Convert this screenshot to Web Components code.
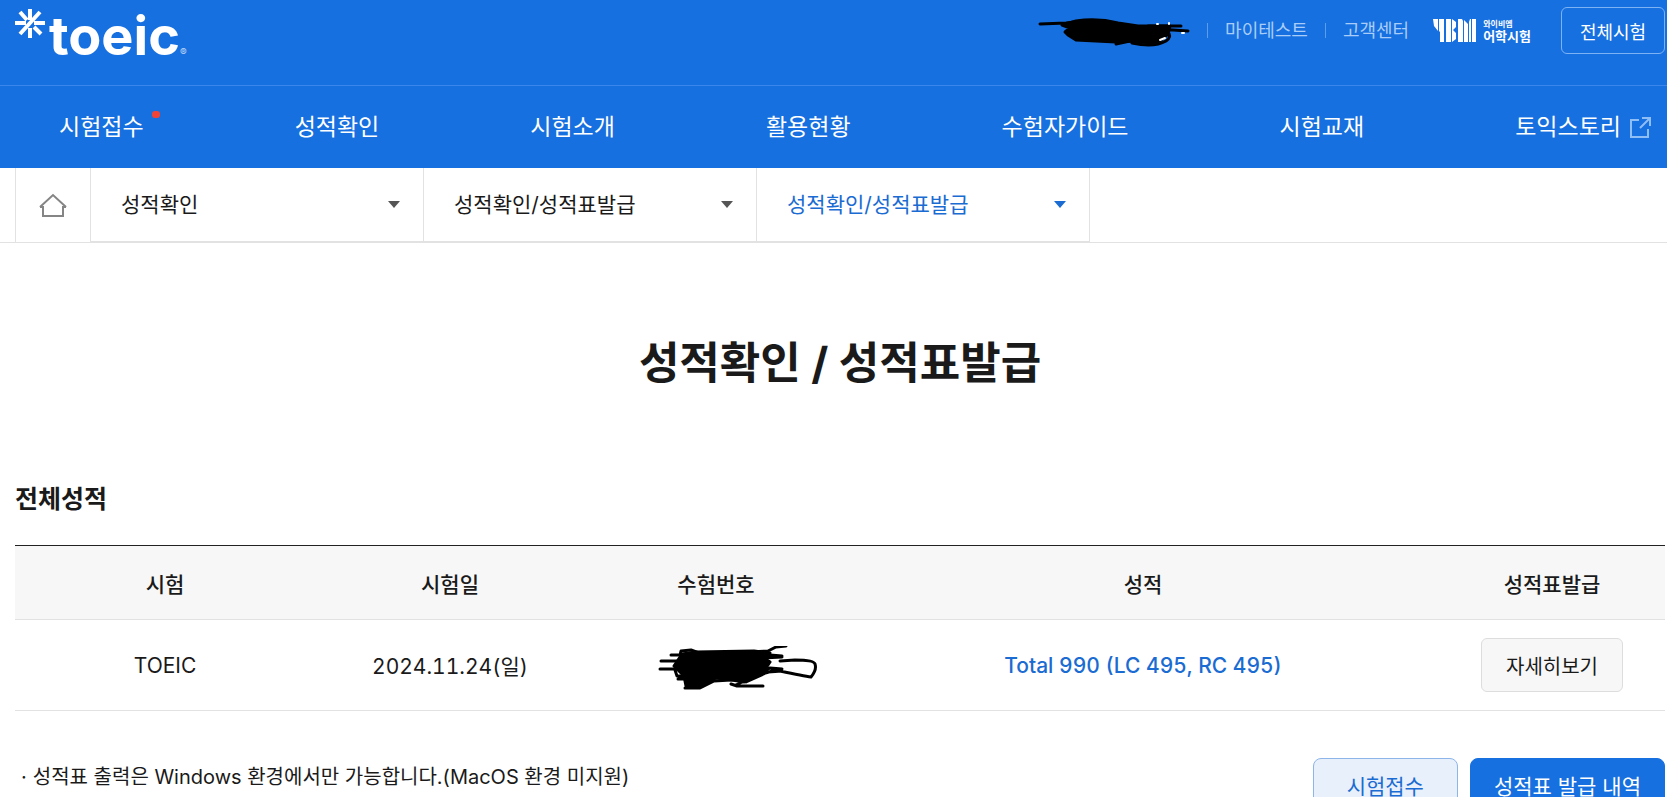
<!DOCTYPE html>
<html lang="ko">
<head>
<meta charset="UTF-8">
<meta name="viewport" content="width=device-width, initial-scale=1.0">
<title>성적확인/성적표발급 | TOEIC</title>
<style>
  :root {
    --blue: #1770E0;
    --link: #1A6BD2;
    --ink: #1A1A1A;
    --line: #E2E2E2;
  }

  body {
    margin: 0;
    background: #FFFFFF;
    color: var(--ink);
    font-family: Inter, "Noto Sans CJK KR", sans-serif;
  }
</style>
</head>
<body>
  <toeic-page></toeic-page>

<script>
class ToeicLogo extends HTMLElement {
  connectedCallback() {
    this.attachShadow({ mode: 'open' });

    this.shadowRoot.innerHTML = `
      <style>
        :host {
          display: block;
        }

        a {
          display: flex;
          align-items: flex-start;
          color: #FFFFFF;
          text-decoration: none;
        }

        svg {
          width: 30px;
          height: 30px;
          margin-top: 8px;
        }

        .word {
          margin-left: 4px;
          font-size: 54px;
          font-weight: 700;
          line-height: 72px;
        }

        .reg {
          align-self: flex-end;
          font-size: 10px;
          line-height: 40px;
          opacity: 0.7;
        }
      </style>

      <a href="/">
        <svg viewBox="0 0 30 30" fill="none" stroke="currentColor" stroke-width="4" aria-hidden="true">
          <path d="M15 1v11M15 30V20M0 15h11M30 15H19M5 4l7 8M25 4L5 26M26 26l-7-7"></path>
        </svg>
        <span class="word">toeic</span>
        <span class="reg">®</span>
      </a>
    `;
  }
}

class YbmLogo extends HTMLElement {
  connectedCallback() {
    this.attachShadow({ mode: 'open' });

    this.shadowRoot.innerHTML = `
      <style>
        :host {
          display: block;
        }

        a {
          display: flex;
          align-items: center;
          gap: 7px;
          color: #FFFFFF;
          text-decoration: none;
        }

        svg {
          width: 43px;
          height: 23px;
        }

        .names {
          display: flex;
          flex-direction: column;
          font-weight: 700;
        }

        .small {
          font-size: 8px;
          line-height: 10px;
        }

        .large {
          font-size: 13px;
          line-height: 14px;
        }
      </style>

      <a href="#" aria-label="YBM 어학시험">
        <svg viewBox="0 0 43 23" fill="currentColor" aria-hidden="true">
          <path d="M0 0h5v12L1 7zM6 0h5v23H7V13L6 12zM13 0h5v23h-5z"></path>
          <path d="M19 0l4 3v5l-3 3 3 3v6l-4 3z"></path>
          <path d="M25 0h4l1 2v21h-5zM31 1l4 4v18h-4zM36 3l1-3h1v23h-2zM39 0h4v23h-4z"></path>
        </svg>
        <span class="names">
          <span class="small">와이비엠</span>
          <span class="large">어학시험</span>
        </span>
      </a>
    `;
  }
}

class SiteHeader extends HTMLElement {
  connectedCallback() {
    this.attachShadow({ mode: 'open' });

    this.shadowRoot.innerHTML = `
      <style>
        :host {
          display: block;
          background: var(--blue);
          color: #FFFFFF;
        }

        .top {
          display: flex;
          justify-content: space-between;
          align-items: flex-start;
          height: 85px;
          padding: 0 2px 0 15px;
          border-bottom: 1px solid #3A86EC;
        }

        .util {
          display: flex;
          align-items: center;
          padding-top: 7px;
        }

        .util a {
          color: #A9CDF8;
          font-size: 18px;
          line-height: 26px;
          text-decoration: none;
        }

        .bar {
          width: 1px;
          height: 15px;
          margin: 0 17px;
          background: #5C9DEE;
        }

        .scribble {
          width: 152px;
          height: 32px;
        }

        ybm-logo {
          margin: 0 30px 0 24px;
        }

        .all {
          width: 104px;
          height: 47px;
          padding: 0;
          border: 1px solid #7DB3F5;
          border-radius: 6px;
          background: none;
          color: #FFFFFF;
          font: inherit;
          font-size: 18px;
        }

        nav {
          display: flex;
          justify-content: space-between;
          align-items: center;
          height: 82px;
          padding: 0 16px 0 59px;
        }

        nav a {
          position: relative;
          display: flex;
          align-items: center;
          gap: 9px;
          color: #FFFFFF;
          font-size: 23px;
          line-height: 32px;
          text-decoration: none;
        }

        .new::after {
          content: "";
          position: absolute;
          top: 0;
          right: -16px;
          width: 8px;
          height: 7px;
          border-radius: 3px;
          background: #F04438;
        }

        nav svg {
          width: 21px;
          height: 21px;
        }
      </style>

      <div class="top">
        <toeic-logo></toeic-logo>
        <div class="util">
          <svg class="scribble" viewBox="0 0 152 32" fill="none" stroke="#000000" stroke-width="3" stroke-linecap="round" stroke-linejoin="round" aria-hidden="true">
            <path fill="#000000" d="M24 10L38 6Q60 3 80 8L100 11 132 11 130 19 122 26 114 28 92 26 78 27 38 25 30 20 27 17 32 13Z"></path>
            <path d="M2 9L28 8 46 6M110 11h33M120 14l30 2M130 17q4 5-2 9-12 7-34 2M78 29l14-3"></path>
            <path stroke="#FFFFFF" stroke-width="2" d="M144 18h2M122 25l5-2M131 8v1M119 9h1"></path>
          </svg>
          <span class="bar"></span>
          <a href="#">마이테스트</a>
          <span class="bar"></span>
          <a href="#">고객센터</a>
          <ybm-logo></ybm-logo>
          <button class="all" type="button">전체시험</button>
        </div>
      </div>

      <nav aria-label="주 메뉴">
        <a href="#" class="new">시험접수</a>
        <a href="#">성적확인</a>
        <a href="#">시험소개</a>
        <a href="#">활용현황</a>
        <a href="#">수험자가이드</a>
        <a href="#">시험교재</a>
        <a href="#">토익스토리
          <svg viewBox="0 0 21 21" fill="none" stroke="#8FBDF5" stroke-width="2" aria-hidden="true">
            <path d="M9 3H1v17h17v-8M12 1h8v8M20 1L10 11"></path>
          </svg>
        </a>
      </nav>
    `;
  }
}

class CrumbSelect extends HTMLElement {
  connectedCallback() {
    this.attachShadow({ mode: 'open' });

    this.shadowRoot.innerHTML = `
      <style>
        :host {
          display: grid;
          flex: 0 1 333px;
          box-sizing: border-box;
          align-items: center;
          border-right: 1px solid var(--line);
          border-bottom: 1px solid var(--line);
          color: var(--ink);
          --caret: #555555;
        }

        :host([current]) {
          color: var(--link);
          --caret: var(--link);
        }

        select {
          grid-area: 1 / 1;
          width: 100%;
          height: 73px;
          padding: 0 50px 0 30px;
          border: 0;
          appearance: none;
          background: none;
          color: inherit;
          font: inherit;
          font-size: 21px;
        }

        svg {
          grid-area: 1 / 1;
          justify-self: end;
          width: 12px;
          height: 7px;
          margin-right: 23px;
          fill: var(--caret);
          pointer-events: none;
        }
      </style>

      <select aria-label="${this.getAttribute('label')}">
        <option>${this.textContent}</option>
      </select>
      <svg viewBox="0 0 12 7" aria-hidden="true"><path d="M0 0h12L6 7z"></path></svg>
    `;
  }
}

class BreadcrumbBar extends HTMLElement {
  connectedCallback() {
    this.attachShadow({ mode: 'open' });

    this.shadowRoot.innerHTML = `
      <style>
        :host {
          display: block;
          border-bottom: 1px solid var(--line);
        }

        nav {
          display: flex;
          padding-left: 15px;
        }

        .home {
          display: flex;
          flex: 0 0 76px;
          box-sizing: border-box;
          align-items: center;
          justify-content: center;
          border-left: 1px solid var(--line);
          border-right: 1px solid var(--line);
        }

        svg {
          width: 28px;
          height: 24px;
        }
      </style>

      <nav aria-label="현재 위치">
        <a class="home" href="/" aria-label="홈">
          <svg viewBox="0 0 28 24" fill="none" stroke="#858585" stroke-width="2" aria-hidden="true">
            <path d="M1 14L14 2l13 12M4 13v10h20V13M1 14h4M23 14h4"></path>
          </svg>
        </a>
        <slot></slot>
      </nav>
    `;
  }
}

class ScoreTable extends HTMLElement {
  connectedCallback() {
    this.attachShadow({ mode: 'open' });

    this.shadowRoot.innerHTML = `
      <style>
        :host {
          display: block;
        }

        table {
          width: 100%;
          border-collapse: separate;
          border-spacing: 0;
          border-top: 1px solid #222222;
          table-layout: fixed;
          font-size: 21px;
          text-align: center;
        }

        th,
        td {
          padding: 0;
          border-bottom: 1px solid var(--line);
        }

        th {
          height: 73px;
          background: #F7F7F7;
          font-weight: 500;
        }

        td {
          height: 90px;
          font-variant-numeric: tabular-nums;
        }

        .exam {
          width: 300px;
        }

        .date {
          width: 270px;
        }

        .number {
          width: 262px;
        }

        .issue {
          width: 226px;
        }

        td a {
          color: var(--link);
          font-weight: 500;
          text-decoration: none;
        }

        td svg {
          display: block;
          width: 160px;
          height: 44px;
          margin: 6px auto 0 73px;
        }

        button {
          width: 142px;
          height: 54px;
          padding: 0;
          border: 1px solid #DDDDDD;
          border-radius: 6px;
          background: #F7F7F7;
          color: var(--ink);
          font: inherit;
          font-size: 20px;
        }
      </style>

      <table>
        <thead>
          <tr>
            <th class="exam" scope="col">시험</th>
            <th class="date" scope="col">시험일</th>
            <th class="number" scope="col">수험번호</th>
            <th scope="col">성적</th>
            <th class="issue" scope="col">성적표발급</th>
          </tr>
        </thead>
        <tbody>
          <tr>
            <td>TOEIC</td>
            <td>2024.11.24(일)</td>
            <td>
              <svg viewBox="0 0 160 44" fill="none" stroke="#000000" stroke-width="3" stroke-linecap="round" stroke-linejoin="round" aria-hidden="true">
                <path fill="#000000" d="M24 8L38 6 96 5 112 7 106 12 112 16 108 22 104 28 90 31 86 36 74 34 58 32 44 40 28 40 26 30 22 26 16 20 20 14Z"></path>
                <path d="M3 15h22M2 23h18M13 9h14M22 9l1-4 10-1 8 3M17 24l2 6h12M20 33h10M27 42h15l14-7 34-2M73 38l6 2h26M78 39l18-9 26-7M88 36l22-10 14-1M90 6l20-1 8-4 10-1M100 17l12-8 12 1M104 12l20-1M100 27l12-5 12 1M122 15l15-1q19 0 20 4 2 6-4 13-7-1-31-6"></path>
              </svg>
            </td>
            <td><a href="#">Total 990 (LC 495, RC 495)</a></td>
            <td><button type="button">자세히보기</button></td>
          </tr>
        </tbody>
      </table>
    `;
  }
}

class ActionButton extends HTMLElement {
  connectedCallback() {
    this.attachShadow({ mode: 'open' });

    this.shadowRoot.innerHTML = `
      <style>
        :host {
          display: block;
        }

        button {
          height: 58px;
          padding: 0 33px;
          border: 1px solid #8DB5EA;
          border-radius: 8px;
          background: #E8F0FB;
          color: var(--link);
          font: inherit;
          font-size: 21px;
          line-height: 24px;
          white-space: nowrap;
        }

        :host([primary]) button {
          padding: 0 23px;
          border-color: var(--blue);
          background: var(--blue);
          color: #FFFFFF;
        }
      </style>

      <button type="button"><slot></slot></button>
    `;
  }
}

class ToeicPage extends HTMLElement {
  connectedCallback() {
    this.attachShadow({ mode: 'open' });

    this.shadowRoot.innerHTML = `
      <style>
        :host {
          display: block;
        }

        main {
          padding: 0 2px 0 15px;
        }

        h1 {
          margin: 88px 0 86px;
          font-size: 44px;
          font-weight: 700;
          line-height: 64px;
          text-align: center;
        }

        h2 {
          margin: 0 0 28px;
          font-size: 25px;
          font-weight: 700;
          line-height: 36px;
        }

        .foot {
          display: flex;
          justify-content: space-between;
          align-items: flex-start;
          padding-top: 47px;
        }

        ul {
          margin: 0;
          padding: 4px 0 0 6px;
          font-size: 20px;
          line-height: 30px;
          list-style: none;
        }

        li {
          display: flex;
          gap: 6px;
        }

        li::before {
          content: "·";
        }

        .actions {
          display: flex;
          gap: 12px;
        }
      </style>

      <site-header></site-header>
      <breadcrumb-bar>
        <crumb-select label="대메뉴">성적확인</crumb-select>
        <crumb-select label="중메뉴">성적확인/성적표발급</crumb-select>
        <crumb-select label="소메뉴" current>성적확인/성적표발급</crumb-select>
      </breadcrumb-bar>
      <main>
        <h1>성적확인 / 성적표발급</h1>
        <h2>전체성적</h2>
        <score-table></score-table>
        <div class="foot">
          <ul>
            <li>성적표 출력은 Windows 환경에서만 가능합니다.(MacOS 환경 미지원)</li>
          </ul>
          <div class="actions">
            <action-button>시험접수</action-button>
            <action-button primary>성적표 발급 내역</action-button>
          </div>
        </div>
      </main>
    `;
  }
}

customElements.define('toeic-logo', ToeicLogo);
customElements.define('ybm-logo', YbmLogo);
customElements.define('site-header', SiteHeader);
customElements.define('crumb-select', CrumbSelect);
customElements.define('breadcrumb-bar', BreadcrumbBar);
customElements.define('score-table', ScoreTable);
customElements.define('action-button', ActionButton);
customElements.define('toeic-page', ToeicPage);
</script>
</body>
</html>
